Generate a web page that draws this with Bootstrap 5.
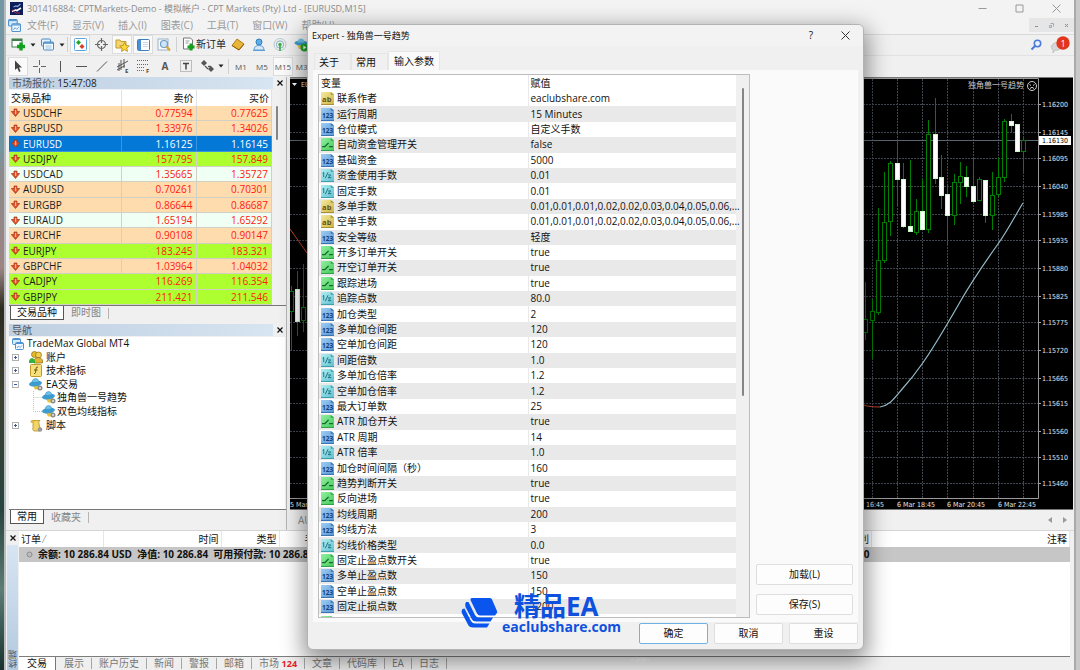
<!DOCTYPE html>
<html lang="zh-CN">
<head>
<meta charset="utf-8">
<meta name="viewport" content="width=device-width, initial-scale=1">
<title>CPT Markets - EURUSD,M15</title>
<link rel="stylesheet" href="https://cdn.jsdelivr.net/npm/bootstrap@5.3.0/dist/css/bootstrap.min.css">
<style>
:root{--ui:"Open Sans","Noto Sans CJK SC",sans-serif;--face:#f0f0f0;--line:#8c8c8c}
body{font:10px/13px var(--ui);color:#111;background:#c9c9c9;height:100vh;min-height:640px;overflow:hidden}
button{font:inherit;color:inherit;background:none;border:0;padding:0;line-height:13px;white-space:nowrap}
svg{display:block;flex:none}
.desk{width:6px;background:linear-gradient(#7397a2 0 22%,#8e8a8c 26%,#9c8583 40%,#2e2b20 46%,#3c4232 60%,#28443f 76%,#5c7c76 88%,#18332f);border-right:2px solid #b6bbbe}
.appwin{background:var(--face);border-right:2px solid #a9a9a9;margin-right:4px;min-width:0}
.titlebar{height:17px;color:#8c8c8c;font-size:9px;padding-left:4px;background:#f3f3f3}
.menubar{height:18px;color:#9a9a9a;padding-left:2px;background:#f3f3f3;border-bottom:1px solid #d9d9d9}
.menubar .items{gap:14px;margin-left:6px}
.mdi{background:#e6e6e6;width:45px;height:14px;color:#8aa;}
.tools{height:21px;padding-left:2px;border-bottom:1px solid #e2e2e2}
.tbtn{width:20px;height:19px;margin-right:1px;display:flex;align-items:center;justify-content:center;color:#555;font-size:8px}
.tbtn.on{background:#fafafa;outline:1px solid #dcdcdc;outline-offset:-1px}
.tcaret{width:9px;display:flex;justify-content:center}
.tcaret.slim{width:7px}
.tsep{width:1px;height:15px;background:#cfcfcf;margin:0 2px 0 1px}
.dock{width:281px;padding:0 0 2px 3px;border-right:1px solid #b5b5b5}
.dockhead{height:13px;color:#4f5560}
.dockhead .grad{background:linear-gradient(90deg,#bfd0e2,#d7e4f1);line-height:12px;padding-left:3px;height:12px}
.dockhead button{width:13px;color:#111}
.quotes{width:263px;table-layout:fixed;height:215px;border-collapse:collapse;color:#ff1a12}
.quotes th{font-weight:400;color:#111;background:#fff;border-right:1px solid #e2e2e2;padding:0 2px;height:16px}
.quotes td{border-right:1px solid #d2cfc4;border-bottom:1px solid #d2cfc4;padding:0 3px}
.quotes tr>*{padding-top:0;padding-bottom:0;line-height:12px}
.quotes tr>:nth-child(n+2){text-align:right}
.quotes td:first-child{color:#1c1c1c}
.quotes td:first-child,.params td:first-child{padding-left:2px}
.cellrow{display:flex;align-items:center;gap:3px}
.peach{background:#ffdcae}.lime{background:#adff2f}.mint{background:#f0fff4}
.quotes tr.sel td{background:#0478d7;color:#fff;border-color:#3a96e0}
.thumb{background:#858585;border-radius:2px;width:2px}
.docktabs{height:19px;border-top:1px solid #777}
.docktabs button{height:14px;color:#858585;padding:0 7px}
.docktabs .on{background:#fff;color:#111;border:1px solid #555;border-top:0;margin-left:1px;padding:0 6px}
.docktabs .bar{height:11px;width:1px;background:#b5b5b5;margin-top:2px}
.tree{background:#fff;margin-right:1px}
.tree ul{display:grid;grid-template-rows:repeat(7,1fr);height:95px;padding:0 0 0 3px;margin:0;list-style:none}
.tree li{display:flex;align-items:center;gap:3px}
.tree .sub{padding-left:21px;gap:1px}
.tree .sub svg:first-child{margin-right:-1px}
.chartbox{background:#000;border-top:1px solid #777;border-bottom:1px solid #777;min-height:0;overflow:hidden}
.chartcol{min-width:0;padding:0 1px 0 3px}
.ctabs{height:20px;color:#8a8a8a}
.term{height:140px;border-top:1px solid #d5d5d5}
.tside{width:12px;margin-right:1px;padding-left:1px}
.tside .grad{background:linear-gradient(#d7e5f3,#b3c9df);color:#4f5560;padding-bottom:2px}
.tside .grad span{writing-mode:vertical-rl;transform:rotate(180deg);line-height:11px;font-size:9px}
.trade{width:100%;table-layout:fixed;border-collapse:collapse}
.trade th{font-weight:400;height:16px;padding:0 2px;background:#fff;border-right:1px solid #e6e6e6;white-space:nowrap;overflow:hidden}
.trade td{background:#c6c6c6;height:15px;padding:0 2px;font-weight:700;white-space:nowrap}
.termtabs{border-top:1px solid #7d7d7d;height:14px;background:#efefef;color:#777}
.termtabs button{padding:0 8px 0 7px;height:13px;position:relative}
.termtabs button+button:not(:nth-child(2))::before{content:"";position:absolute;left:-1px;top:1px;height:11px;width:1px;background:#a5a5a5}
.termtabs .on{background:#fff;color:#111;padding:0 8px;border-right:1px solid #777;margin-right:1px}
.termtabs b{color:#e8202b;font-size:9px}
.sizemark{margin-left:168px}

.dlg{position:absolute;left:307px;top:24px;width:557px;background:#f0f0f0;border:1px solid #b3b3b3;border-radius:6px;box-shadow:0 8px 22px 4px rgba(0,0,0,.42);overflow:hidden}
.dlghead{height:21px;background:#f3f3f3;padding:0 9px 0 4px}
.dlghead span{font-size:9px}
.dlgtabs{padding:5px 5px 0 6px;height:24px}
.dlgtabs button{height:17px;border:1px solid #e6e6e6;border-bottom:0;padding:0 11px 0 4px}
.dlgtabs .on{height:19px;background:#fafafa;padding:0 5px}
.page{background:#fafafa;margin:0 5px;padding:4px 5px 4px 5px;gap:6px}
.plist{width:433px;height:544px;border:1px solid #bdbdbd;overflow:hidden;background:#f0f0f0}
.params{width:417px;height:555px;table-layout:fixed;border-collapse:collapse;background:#fff}
.params tr>*{padding:0 0 0 2px;font-weight:400;line-height:13px;white-space:nowrap;border-right:1px solid #e9e9e9}
.params th{height:16px}
.params tbody tr:nth-child(even){background:#e9e9e9}
.params th:last-child,.params td:last-child{border:0}
.plist .thumb{height:308px;margin:13px 0 0 6px}
.side{gap:9px;padding-bottom:3px}
.btnw{background:#fdfdfd;border:1px solid #dedede;border-radius:2px;height:21px;width:69px}
.btnw.wide{width:97px}
.btnw.primary{border-color:#6fb2e6}
.foot{gap:6px;padding:1px 5px 5px 0}
.wm{position:absolute;left:153px;top:568px;color:#0e51de;gap:4px;font-weight:700}
.wm .big{font-size:26px;line-height:27px;padding-left:12px}
.wm .site{font-size:14px;line-height:14px}
</style>
</head>
<body>
<svg width="0" height="0" class="position-absolute" aria-hidden="true">
  <defs>
    <linearGradient id="gb" x1="0" y1="0" x2="1" y2="1"><stop offset="0" stop-color="#9fcdf3"/><stop offset="1" stop-color="#5797d4"/></linearGradient>
    <linearGradient id="gy" x1="0" y1="0" x2="1" y2="1"><stop offset="0" stop-color="#f4eaa0"/><stop offset="1" stop-color="#cdb440"/></linearGradient>
    <linearGradient id="gg" x1="0" y1="0" x2="1" y2="1"><stop offset="0" stop-color="#92f0a0"/><stop offset="1" stop-color="#43c95b"/></linearGradient>
    <linearGradient id="gc" x1="0" y1="0" x2="1" y2="1"><stop offset="0" stop-color="#b2eef2"/><stop offset="1" stop-color="#5fc0cf"/></linearGradient>
    <symbol id="i-down" viewBox="0 0 9 9"><path d="M3 1h3v2.500h2.700L4.500 8.500.3 3.500H3z" fill="#e2502a" stroke="#9c3a20" stroke-width=".7"/><path d="M4 2h1.200v4H4z" fill="#ffb38e"/></symbol>
    <symbol id="i-wins" viewBox="0 0 12 12"><rect x=".5" y=".5" width="8" height="6" rx="1" fill="#d8ebfb" stroke="#4c92d0"/><path d="M1 1.500h7" stroke="#4c92d0"/><rect x="3.500" y="4.500" width="8" height="7" rx="1" fill="#eef7ff" stroke="#4c92d0"/><path d="M4 5.500h7" stroke="#4c92d0"/><path d="m5 10 1.500-2L8 9.500 10 7.500" fill="none" stroke="#4c92d0" stroke-width=".8"/></symbol>
    <symbol id="i-ea" viewBox="0 0 14 13"><path d="M3 6h8L9 11.500H6z" fill="#e6c33c"/><ellipse cx="6.500" cy="5.500" rx="6.500" ry="2.800" fill="#3c9bd0" transform="rotate(-8 7 5.500)"/><path d="M3 4.500Q3.500.5 6.500.5t3.500 3.500z" fill="#6fc3ea" stroke="#2c86bd" stroke-width=".5"/><circle cx="11" cy="10" r="2.500" fill="#8d8d8d"/><circle cx="11" cy="10" r="1" fill="#e5e5e5"/></symbol>
    <symbol id="i-plus" viewBox="0 0 7 7"><rect x=".5" y=".5" width="6" height="6" fill="#fff" stroke="#b0b0b0"/><path d="M2 3.500h3M3.500 2v3" stroke="#3a57a5"/></symbol>
    <symbol id="i-minus" viewBox="0 0 7 7"><rect x=".5" y=".5" width="6" height="6" fill="#fff" stroke="#b0b0b0"/><path d="M2 3.500h3" stroke="#3a57a5"/></symbol>
    <symbol id="i-caret" viewBox="0 0 6 4"><path d="M.5.5h5L3 3.500z" fill="#222"/></symbol>
    <symbol id="p-0" viewBox="0 0 12 12"><path d="M0 0h9l3 2v10H0z" fill="url(#gy)"/><path d="M9 0v2.500h3" fill="#a89235"/><path d="M0 11.500h12" stroke="#a89235"/><text x="1" y="9" font-size="7" font-weight="700" fill="#66541a">ab</text></symbol>
    <symbol id="p-1" viewBox="0 0 12 12"><path d="M0 0h9l3 2v10H0z" fill="url(#gb)"/><path d="M9 0v2.500h3" fill="#3a74b5"/><path d="M0 11.500h12" stroke="#3a74b5"/><text x="1" y="9" font-size="6" font-weight="700" fill="#12417f">123</text></symbol>
    <symbol id="p-2" viewBox="0 0 12 12"><path d="M0 0h9l3 2v10H0z" fill="url(#gg)"/><path d="M9 0v2.500h3" fill="#31a346"/><path d="M0 11.500h12" stroke="#31a346"/><path d="M1 8h2.500L7 4.500M7.500 8H11" fill="none" stroke="#12682a" stroke-width="1.300"/></symbol>
    <symbol id="p-3" viewBox="0 0 12 12"><path d="M0 0h9l3 2v10H0z" fill="url(#gc)"/><path d="M9 0v2.500h3" fill="#3f9fb0"/><path d="M0 11.500h12" stroke="#3f9fb0"/><path d="m1.500 4 1-1V7.500M4 8.500l2.500-5.500M6.500 5.500h2.500L6.500 8H9.500" fill="none" stroke="#1d7485" stroke-width=".9"/></symbol>
  </defs>
</svg>

<div class="d-flex h-100 position-relative">
  <div class="desk flex-shrink-0"></div>
  <div class="appwin flex-grow-1 d-flex flex-column">

    <header class="titlebar d-flex align-items-center">
      <svg width="13" height="13" viewBox="0 0 13 13"><rect width="13" height="13" fill="#0c1c56"/><path d="M2 9.500 5.500 8l1.500.5L11 6" stroke="#fff" stroke-width="1.600" fill="none"/><path d="M3.500 5 6 4l1.500.5L10.500 2" stroke="#8fa6e8" stroke-width="1.200" fill="none"/><path d="m2 8 4 3h4" stroke="#d6305a" stroke-width=".8" fill="none"/></svg>
      <span class="ms-1 text-nowrap">301416884: CPTMarkets-Demo - 模拟帐户 - CPT Markets (Pty) Ltd - [EURUSD,M15]</span>
      <div class="d-flex ms-auto">
        <button style="width:37px" aria-label="最小化"><svg class="m-auto" width="9" height="9"><path d="M.5 4.500h8" stroke="#999"/></svg></button>
        <button style="width:37px" aria-label="最大化"><svg class="m-auto" width="9" height="9"><path d="M1 1h7v7H1z" stroke="#999" fill="none"/></svg></button>
        <button style="width:36px" aria-label="关闭"><svg class="m-auto" width="9" height="9"><path d="m.5.5 8 8m0-8-8 8" stroke="#999"/></svg></button>
      </div>
    </header>

    <nav class="menubar d-flex align-items-center">
      <svg width="13" height="13"><use href="#i-wins"/></svg>
      <div class="items d-flex">
        <button>文件(F)</button><button>显示(V)</button><button>插入(I)</button><button>图表(C)</button><button>工具(T)</button><button>窗口(W)</button><button>帮助(H)</button>
      </div>
      <div class="mdi ms-auto d-flex align-items-center justify-content-around">
        <svg width="7" height="7"><path d="M2 4.500h3" stroke="#7c93ab"/></svg>
        <svg width="7" height="7"><path d="M2.500 1.500h3v3M1.500 3.500h2v2h-2z" stroke="#9ab" fill="none"/></svg>
        <svg width="7" height="7"><path d="m2 2 3 3m0-3L2 5" stroke="#7c93ab"/></svg>
      </div>
    </nav>

    <div class="tools d-flex align-items-center">
      <button class="tbtn me-0" aria-label="新图表"><svg width="15" height="14" viewBox="0 0 15 14"><rect x="1" y="1" width="10" height="8" fill="#fff" stroke="#3f7f4d"/><path d="M1 2h10" stroke="#3f7f4d" stroke-width="2"/><path d="M6 8.500h8M10 4.500v8" stroke="#12a11f" stroke-width="3.400"/></svg></button>
      <span class="tcaret"><svg width="6" height="4"><use href="#i-caret"/></svg></span>
      <button class="tbtn me-0" aria-label="配置"><svg width="15" height="13" viewBox="0 0 14 13"><rect x="1" y="1" width="9" height="7" rx="1" fill="#e4f1fc" stroke="#4b8cc4"/><rect x="3" y="4" width="10" height="8" rx="1" fill="#f4faff" stroke="#4b8cc4"/><path d="M3 5h10" stroke="#4b8cc4" stroke-width="1.500"/><path d="M5 8h6M5 10h6" stroke="#9cc3e4"/></svg></button>
      <span class="tcaret"><svg width="6" height="4"><use href="#i-caret"/></svg></span>
      <span class="tsep"></span>
      <button class="tbtn on" aria-label="市场报价"><svg width="13" height="13" viewBox="0 0 13 13"><rect x=".5" y=".5" width="12" height="12" rx="1" fill="#fff" stroke="#5da5e0"/><path d="m4.500 2 2.500 2.500L4.500 7 2 4.500z" fill="#21a72c"/><path d="m8 6 2.500 2.500L8 11 5.500 8.500z" fill="#dd3c22"/></svg></button>
      <button class="tbtn" aria-label="数据窗口"><svg width="13" height="13" viewBox="0 0 13 13"><circle cx="6.500" cy="6.500" r="4" fill="none" stroke="#666" stroke-width="1.200"/><path d="M6.500 0v5M6.500 8v5M0 6.500h5M8 6.500h5" stroke="#666" stroke-width="1.200"/></svg></button>
      <button class="tbtn on" aria-label="导航"><svg width="15" height="14" viewBox="0 0 15 14"><path d="M1 2h4l1 1.500h5V10H1z" fill="#f3d574" stroke="#c49b2b"/><path d="m9.500 4.500 1.500 3 3.300.4-2.500 2.200.7 3.300-3-1.700-3 1.700.7-3.300L4.700 8 8 7.500z" fill="#ffd93a" stroke="#b58712" stroke-width=".8"/></svg></button>
      <button class="tbtn on" aria-label="终端"><svg width="13" height="12" viewBox="0 0 13 12"><rect x=".5" y=".5" width="12" height="11" rx="1" fill="#fff" stroke="#3e7fbe"/><path d="M1 1h3v10H1z" fill="#4a90d6"/><path d="M6 3.500h5M6 5.500h5M6 7.500h5" stroke="#c9d8e6"/></svg></button>
      <button class="tbtn" aria-label="策略测试"><svg width="14" height="14" viewBox="0 0 14 14"><rect x="1" y="1" width="10" height="11" fill="#f7f9fb" stroke="#9ab4cc"/><circle cx="7" cy="6" r="3.500" fill="#cfe6fa" stroke="#6f9cc4" stroke-width="1.200"/><path d="m9.500 8.500 3.500 4" stroke="#d9a52a" stroke-width="2"/></svg></button>
      <span class="tsep me-1"></span>
      <button class="d-flex align-items-center text-dark" style="width:47px"><svg width="15" height="15" viewBox="0 0 14 15"><path d="M2 1h7l2 2v9H2z" fill="#fff" stroke="#777"/><path d="M4 4h4M4 6h3" stroke="#999"/><path d="M6 10h7M9.500 6.500v7" stroke="#12a11f" stroke-width="3"/></svg>新订单</button>
      <button class="tbtn" aria-label="代码"><svg width="14" height="13" viewBox="0 0 14 13"><path d="m6 1 7 5-5 6-7-4.500z" fill="#e8b43a" stroke="#b07f17"/><path d="m1 7.500 7 4.500 5-6" fill="none" stroke="#8a5f0d"/></svg></button>
      <button class="tbtn" aria-label="社区"><svg width="14" height="14" viewBox="0 0 14 14"><circle cx="7" cy="4" r="3" fill="#5caee8" stroke="#2f7fc0"/><path d="M2 12q0-4.500 5-4.500t5 4.500z" fill="#d5e9f8" stroke="#5d9fd4"/><path d="M1 12.500h12" stroke="#5d9fd4"/></svg></button>
      <button class="tbtn" aria-label="信号"><svg width="14" height="14" viewBox="0 0 14 14" fill="none"><circle cx="7" cy="6.500" r="6" stroke="#b5c7cf"/><circle cx="7" cy="6.500" r="3.700" stroke="#86b0c4"/><circle cx="7" cy="6.500" r="1.700" fill="#3dae45"/><path d="M7 7v6" stroke="#3dae45" stroke-width="1.600"/></svg></button>
      <button class="tbtn" aria-label="自动交易"><svg width="15" height="14" viewBox="0 0 15 14"><path d="M3 6h8l-2 5H5z" fill="#e9bb3a"/><ellipse cx="7" cy="5" rx="6.500" ry="2.500" fill="#3c9bd0"/><path d="M3.500 4.500Q4 .5 7 .5t3.500 4z" fill="#6fc3ea"/><circle cx="10.500" cy="9.500" r="4" fill="#1fa52c"/><path d="M9.300 7.500v4l3-2z" fill="#fff"/></svg></button>
      <div class="ms-auto d-flex align-items-center pe-1 gap-2">
        <button aria-label="搜索"><svg width="12" height="12" viewBox="0 0 12 12"><circle cx="7.500" cy="4.500" r="3.200" fill="#e9f1ff" stroke="#4c78d8" stroke-width="1.500"/><path d="M5 7 1.500 10.500" stroke="#4c78d8" stroke-width="2"/></svg></button>
        <button aria-label="通知"><svg width="20" height="18" viewBox="0 0 20 18"><path d="M2 9q4-5 9-1l-1 5q-3 2-5 1l-2 3v-3q-3-2-1-5z" fill="#d6d6da" stroke="#b8b8bc" stroke-width=".7"/><circle cx="13" cy="7" r="6.700" fill="#e2351c"/><text x="13" y="10.500" font-size="9" fill="#fff" text-anchor="middle">1</text></svg></button>
      </div>
    </div>

    <div class="tools d-flex align-items-center border-0">
      <button class="tbtn on" aria-label="光标"><svg width="9" height="13" viewBox="0 0 9 13"><path d="M1 .5v9.500l2.300-2L5 12l1.600-.8L5 7.500h3z" fill="#444"/></svg></button>
      <button class="tbtn" aria-label="十字线"><svg width="13" height="13"><path d="M6.500 0v5M6.500 8v5M0 6.500h5M8 6.500h5" stroke="#666"/></svg></button>
      <button class="tbtn" aria-label="垂直线"><svg width="3" height="11"><path d="M1.500 0v11" stroke="#555"/></svg></button>
      <button class="tbtn" aria-label="水平线"><svg width="11" height="3"><path d="M0 1.500h11" stroke="#555"/></svg></button>
      <button class="tbtn" aria-label="趋势线"><svg width="12" height="11"><path d="M1 10.500 11 .5" stroke="#555"/></svg></button>
      <button class="tbtn" aria-label="等距通道"><svg width="14" height="14" viewBox="0 0 14 14"><path d="M1 8 12 2M1 11 9 6.500M5 1v10M8 0v9M3 4v8" stroke="#555" fill="none"/><text x="9" y="13.500" font-size="6" font-weight="700" fill="#444">E</text></svg></button>
      <button class="tbtn" aria-label="斐波那契"><svg width="14" height="14" viewBox="0 0 14 14"><path d="M0 1.500h12M0 5.500h12M0 8.500h8M0 11.500h7" stroke="#666" stroke-dasharray="1 1"/><text x="9" y="13.500" font-size="6" font-weight="700" fill="#444">F</text></svg></button>
      <button class="tbtn" style="font-size:10px"><b>A</b></button>
      <button class="tbtn" aria-label="文字标签"><svg width="12" height="12"><rect x=".5" y=".5" width="11" height="11" fill="none" stroke="#888" stroke-dasharray="1 1"/><path d="M3 3.500h6M6 3v6.500" stroke="#444" stroke-width="1.500"/></svg></button>
      <button class="tbtn me-0" aria-label="箭头"><svg width="13" height="12" viewBox="0 0 13 12"><path d="m3 0 3 3-3 3-3-3z" fill="#555"/><path d="m4 6 3 3M7 6.500l3 0" stroke="#555" fill="none" stroke-width="1.300"/><path d="m10 6 3 3-3 3-3-3z" fill="#555"/></svg></button>
      <span class="tcaret slim"><svg width="6" height="4"><use href="#i-caret"/></svg></span>
      <span class="tsep ms-1"></span>
      <button class="tbtn">M1</button><button class="tbtn">M5</button><button class="tbtn on">M15</button><button class="tbtn">M30</button>
    </div>

    <main class="flex-grow-1 d-flex" style="min-height:0">
      <aside class="dock flex-shrink-0 d-flex flex-column">
        <div class="dockhead d-flex"><div class="grad flex-grow-1">市场报价: <span class="text-dark">15:47:08</span></div><button aria-label="关闭市场报价"><svg class="m-auto" width="6" height="6"><path d="m.5.5 5 5m0-5-5 5" stroke="#111" stroke-width="1.200"/></svg></button></div>
        <div class="d-flex">
          <table class="quotes"><colgroup><col style="width:112px"><col style="width:75px"><col></colgroup>
            <thead><tr><th scope="col">交易品种</th><th scope="col">卖价</th><th scope="col">买价</th></tr></thead>
            <tbody id="quotes"></tbody></table>
          <div class="ps-1"><div class="thumb mt-3" style="height:34px"></div></div>
        </div>
        <div class="docktabs d-flex"><button class="on">交易品种</button><button>即时图</button><span class="bar"></span></div>
        <div class="dockhead d-flex"><div class="grad flex-grow-1">导航</div><button aria-label="关闭导航"><svg class="m-auto" width="6" height="6"><path d="m.5.5 5 5m0-5-5 5" stroke="#111" stroke-width="1.200"/></svg></button></div>
        <div class="tree flex-grow-1">
          <ul>
            <li><svg width="12" height="12"><use href="#i-wins"/></svg>TradeMax Global MT4</li>
            <li><svg width="7" height="7"><use href="#i-plus"/></svg><svg width="4" height="1"></svg><svg width="14" height="13" viewBox="0 0 14 13"><circle cx="5.500" cy="3.500" r="3" fill="#e5b92d" stroke="#8c6a12" stroke-width=".7"/><circle cx="9.500" cy="4" r="3" fill="#f0cf4c" stroke="#8c6a12" stroke-width=".7"/><path d="M5 12V9q1-2.500 4-2.500T13.500 9v3z" fill="#e2b632" stroke="#8c6a12" stroke-width=".7"/><path d="M0 12V9.500Q1 7 3 7t3 2.500V12z" fill="#35b23c"/></svg>账户</li>
            <li><svg width="7" height="7"><use href="#i-plus"/></svg><svg width="4" height="1"></svg><svg width="14" height="13" viewBox="0 0 14 13"><rect x="1.500" y=".5" width="11" height="12" rx="1" fill="#f6e07c" stroke="#bf9a2a"/><path d="M9 3q-2-.5-2 2l-.5 3.500q-.3 1.500-1.500 1M5 6h3.500" fill="none" stroke="#6d5410"/></svg>技术指标</li>
            <li><svg width="7" height="7"><use href="#i-minus"/></svg><svg width="4" height="1"></svg><svg width="14" height="13"><use href="#i-ea"/></svg>EA交易</li>
            <li class="sub"><svg width="9" height="13"><path d="M.5 0v13M.5 6.500H9" stroke="#c4c4c4" stroke-dasharray="1 1"/></svg><svg width="14" height="13"><use href="#i-ea"/></svg>独角兽一号趋势</li>
            <li class="sub"><svg width="9" height="13"><path d="M.5 0v6.500H9" fill="none" stroke="#c4c4c4" stroke-dasharray="1 1"/></svg><svg width="14" height="13"><use href="#i-ea"/></svg>双色均线指标</li>
            <li><svg width="7" height="7"><use href="#i-plus"/></svg><svg width="4" height="1"></svg><svg width="14" height="13" viewBox="0 0 14 13"><path d="M3 1.500h8q-2 1-1 3.500L11 9q1 2-.5 3H5q-2-1-1-3V4.500z" fill="#f3d565" stroke="#b28d22" stroke-width=".8"/><ellipse cx="3.500" cy="2.500" rx="2" ry="1.500" fill="#ddb63d"/><circle cx="11" cy="10.500" r="2.300" fill="#999"/></svg>脚本</li>
          </ul>
        </div>
        <div class="docktabs d-flex"><button class="on">常用</button><button>收藏夹</button><span class="bar"></span></div>
      </aside>

      <section class="chartcol flex-grow-1 d-flex flex-column">
        <div class="chartbox flex-grow-1">
          <svg id="chart" width="100%" height="100%" viewBox="290 77 783 432" preserveAspectRatio="xMaxYMin slice" font-family="DejaVu Sans Condensed, Noto Sans CJK SC, sans-serif" font-size="7" fill="none"></svg>
        </div>
        <div class="ctabs d-flex align-items-center ps-2"><span>AUDUSD,H1</span>
          <div class="ms-auto d-flex gap-2 pe-1"><svg width="6" height="8"><path d="M5 1v6L1 4z" fill="#999"/></svg><svg width="8" height="8"><path d="M2 1v6l4-3z" fill="#999"/></svg></div></div>
      </section>
    </main>

    <section class="term d-flex flex-shrink-0 pe-1">
      <div class="tside flex-shrink-0 d-flex flex-column">
        <button class="py-1" aria-label="关闭终端"><svg class="m-auto" width="6" height="6"><path d="m.5.5 5 5m0-5-5 5" stroke="#111" stroke-width="1.200"/></svg></button>
        <div class="grad flex-grow-1 d-flex align-items-end"><span>终端</span></div>
      </div>
      <div class="flex-grow-1 d-flex flex-column" style="min-width:0">
        <div class="flex-grow-1 bg-white">
          <table class="trade"><colgroup><col style="width:84px"><col style="width:118px"><col style="width:58px"><col style="width:48px"><col><col style="width:198px"></colgroup>
            <thead><tr><th>订单 <span class="text-black-50">⁄</span></th><th class="text-end">时间</th><th class="text-end">类型</th><th class="text-end">手数</th><th class="text-end">获利</th><th class="text-end">注释</th></tr></thead>
            <tbody><tr><td colspan="4"><div class="d-flex align-items-center gap-1 ps-1"><svg width="9" height="9"><circle cx="4.500" cy="4.500" r="2.500" fill="#bbb" stroke="#8d8d8d"/></svg><span style="white-space:pre">余额: 10 286.84 USD  净值: 10 286.84  可用预付款: 10 286.84</span></div></td><td class="text-end">0.00</td><td></td></tr></tbody></table>
        </div>
        <div class="termtabs d-flex"><button class="on">交易</button><button>展示</button><button>账户历史</button><button>新闻</button><button>警报</button><button>邮箱</button><button>市场 <b>124</b></button><button>文章</button><button>代码库</button><button>EA</button><button>日志</button><button aria-label="更多"></button>
          <svg class="sizemark" width="20" height="6"><path d="M0 2.500h3M4 1v3M6 1h2v3H6M9 1l2 3M11 1 9 4M12.500 1v3h2V1zM16 1v3M17 2.500h3" stroke="#fff" fill="none" stroke-width=".8"/></svg></div>
      </div>
    </section>
  </div>

  <div class="dlg" role="dialog" aria-label="Expert">
    <div class="dlghead d-flex align-items-center"><span>Expert - 独角兽一号趋势</span>
      <button class="ms-auto me-4" aria-label="帮助">?</button><button class="p-1" aria-label="关闭"><svg width="9" height="9"><path d="m.5.5 8 8m0-8-8 8" stroke="#333"/></svg></button></div>
    <div class="dlgtabs d-flex align-items-end"><button>关于</button><button>常用</button><button class="on">输入参数</button></div>
    <div class="page d-flex">
      <div class="plist d-flex align-items-start">
        <table class="params"><colgroup><col style="width:209px"><col></colgroup>
          <thead><tr><th scope="col">变量</th><th scope="col">赋值</th></tr></thead>
          <tbody id="params"></tbody></table>
        <div class="thumb"></div>
      </div>
      <div class="side d-flex flex-column justify-content-end"><button class="btnw wide">加载(L)</button><button class="btnw wide">保存(S)</button></div>
    </div>
    <div class="foot d-flex justify-content-end"><button class="btnw primary">确定</button><button class="btnw">取消</button><button class="btnw">重设</button></div>
    <div class="wm d-flex align-items-center">
      <svg width="37" height="31" viewBox="0 0 37 31" fill="#0a55ee"><path d="M11 0h18q1.500 0 2 1.500L36 13q.5 1.500-.5 2.500l-1.500 2H19q-2 0-3-2L9.500 2Q9 0 11 0z"/><path d="M5 4 7.500 4 14 17Q15.500 19.500 18 19.500H32L29.500 23.500H15Q12 23.500 11 21.500L4.500 9Q3.500 6 5 4z"/><path d="M1.500 11 3.500 10.500 10 23Q11.500 25.500 14 25.500H28.500L26 29.500H12Q8.500 29.500 7.500 27.500L.8 15Q0 13 1.500 11z"/></svg>
      <div><div class="big">精品EA</div><div class="site">eaclubshare.com</div></div>
    </div>
  </div>
</div>

<script src="https://cdn.jsdelivr.net/npm/bootstrap@5.3.0/dist/js/bootstrap.bundle.min.js"></script>
<script>
// market watch: symbol, bid, ask, row colour
const quotes = [
  ['USDCHF','0.77594','0.77625','peach'],['GBPUSD','1.33976','1.34026','peach'],['EURUSD','1.16125','1.16145','sel'],
  ['USDJPY','157.795','157.849','lime'],['USDCAD','1.35665','1.35727','mint'],['AUDUSD','0.70261','0.70301','peach'],
  ['EURGBP','0.86644','0.86687','peach'],['EURAUD','1.65194','1.65292','mint'],['EURCHF','0.90108','0.90147','peach'],
  ['EURJPY','183.245','183.321','lime'],['GBPCHF','1.03964','1.04032','peach'],['CADJPY','116.269','116.354','lime'],
  ['GBPJPY','211.421','211.546','lime']];
document.getElementById('quotes').innerHTML = quotes.map(([s,b,a,c]) =>
  `<tr class="${c}"><td><div class="cellrow"><svg width="9" height="9"><use href="#i-down"/></svg>${s}</div></td><td>${b}</td><td>${a}</td></tr>`).join('');

// expert inputs: type (0 text, 1 integer, 2 switch, 3 decimal), name, value
const params = [
  [0,'联系作者','eaclubshare.com'],[1,'运行周期','15 Minutes'],[1,'仓位模式','自定义手数'],[2,'自动资金管理开关','false'],
  [1,'基础资金','5000'],[3,'资金使用手数','0.01'],[3,'固定手数','0.01'],
  [0,'多单手数','0.01,0.01,0.01,0.02,0.02,0.03,0.04,0.05,0.06,...'],[0,'空单手数','0.01,0.01,0.01,0.02,0.02,0.03,0.04,0.05,0.06,...'],
  [1,'安全等级','轻度'],[2,'开多订单开关','true'],[2,'开空订单开关','true'],[2,'跟踪进场','true'],[3,'追踪点数','80.0'],
  [1,'加仓类型','2'],[1,'多单加仓间距','120'],[1,'空单加仓间距','120'],[3,'间距倍数','1.0'],[3,'多单加仓倍率','1.2'],
  [3,'空单加仓倍率','1.2'],[1,'最大订单数','25'],[2,'ATR 加仓开关','true'],[1,'ATR 周期','14'],[3,'ATR 倍率','1.0'],
  [1,'加仓时间间隔（秒）','160'],[2,'趋势判断开关','true'],[2,'反向进场','true'],[1,'均线周期','200'],[1,'均线方法','3'],
  [3,'均线价格类型','0.0'],[2,'固定止盈点数开关','true'],[1,'多单止盈点数','150'],[1,'空单止盈点数','150'],
  [1,'固定止损点数','1200'],[2,'','']];
document.getElementById('params').innerHTML = params.map(([t,n,v]) =>
  `<tr><td><div class="cellrow"><svg width="13" height="13"><use href="#p-${t}"/></svg>${n}</div></td><td>${v}</td></tr>`).join('');

// price chart
const prices = {103:'1.16200',131:'1.16145',157:'1.16095',185:'1.16040',213:'1.15985',239:'1.15935',267:'1.15880',295:'1.15825',
  321:'1.15775',349:'1.15720',377:'1.15665',402:'1.15615',430:'1.15560',456:'1.15510',482:'1.15460'};
const grid = '#414850';
let g = '';
for (const x of [872,897,922,947,973,998,1023]) g += `<path d="M${x}.5 78V497" stroke="${grid}" stroke-dasharray="2 1"/>`;
for (const y in prices) g += `<path d="M290 ${y}.5H1038" stroke="${grid}" stroke-dasharray="2 1"/><path d="M1038 ${y}.5h3" stroke="#aaa"/><text x="1042" y="${+y+3}" fill="#e6e6e6">${prices[y]}</text>`;
g += '<path d="M290 139.500H1038" stroke="#5b6673"/>';
// candles: x, high, open/close top, bottom, low, falling
const candles = [
  [291,285,290,310,350,0],[297,270,288,320,335,1],[303,263,306,319,331,0],
  [865,281,318,331,339,0],[872,298,310,319,358,0],[878,207,259,311,314,0],[884,171,221,259,262,0],[890,160,162,220,235,0],
  [897,139,162,178,204,1],[903,162,178,225,227,1],[910,159,225,230,231,1],[916,198,210,231,234,0],[922,178,210,228,229,1],
  [928,119,133,228,232,0],[935,97,133,177,183,1],[941,154,176,194,208,1],[947,184,193,214,244,1],[954,173,181,214,224,0],
  [960,161,175,181,203,0],[966,165,176,185,196,1],[973,157,185,200,203,1],[979,176,178,199,200,0],[985,179,179,214,222,1],
  [992,171,194,214,229,0],[998,157,176,193,196,0],[1004,118,120,176,181,0],[1011,113,120,124,131,1],[1017,123,123,150,151,1],[1023,137,139,150,171,0]];
for (const [x,h,t,b,l,w] of candles)
  g += `<path d="M${x}.5 ${h}V${t}M${x}.5 ${b}V${l}" stroke="#008000"/><rect x="${x-1.5}" y="${t}.5" width="4" height="${b-t}" fill="${w?'#fff':'#000'}" stroke="${w?'#c8f7c8':'#008000'}"/>`;
g += `<path d="M290 228 307 252 700 395 800 398 864 404Q868 406 880 406" stroke="#c8452c"/>
<path d="M880 406C890 404 893 399 903 387Q913 376 922 363C932 349 948 322 960 301S988 257 998 243 1016 213 1023 202" stroke="#93bcc8" stroke-width="1.200"/>
<path d="M290 77.500H1038.500V497.500H290" stroke="#9a9a9a"/>
<rect x="1039" y="135" width="32" height="9" fill="#fff"/><text x="1042" y="142" fill="#000">1.16130</text>
<path d="M292 82h5l-2.500 3z" fill="#fff"/><text x="301" y="86" fill="#e6e6e6">EURUSD,M15</text>
<text x="1024" y="87" fill="#ccc" font-size="8" text-anchor="end">独角兽一号趋势</text>
<g stroke="#ccc"><circle cx="1032" cy="85" r="4.500"/><path d="m1029.500 83.500 1.500 1m3.500-1-1.500 1M1030 87.500q2-2.500 4 0"/></g>
<g fill="#e6e6e6"><text x="290" y="506">5 Mar 2026</text><text x="846" y="506">6 Mar 16:45</text><text x="897" y="506">6 Mar 18:45</text><text x="947" y="506">6 Mar 20:45</text><text x="998" y="506">6 Mar 22:45</text></g>`;
document.getElementById('chart').innerHTML = g;
</script>
</body>
</html>
